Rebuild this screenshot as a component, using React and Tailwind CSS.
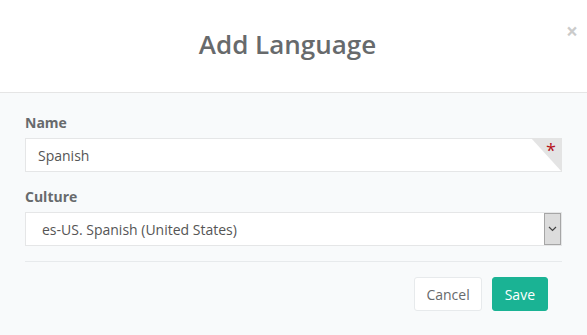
import React from "react";

export default function App() {
  return (
    <div
      className="w-[587px] h-[335px] overflow-hidden bg-[#f8fafb] text-[#676a6c]"
      style={{ fontFamily: '"Open Sans", "Liberation Sans", sans-serif' }}
    >
      <div className="relative h-[93px] bg-white border-b border-[#e5e5e5] flex items-center justify-center pr-[12px] pb-[3px]">
        <h4 className="text-[26px] leading-[29px] font-semibold text-[#676a6c] m-0">Add Language</h4>
        <button className="absolute right-[9px] top-[21px] text-[21px] font-bold leading-none text-black opacity-20">
          ×
        </button>
      </div>
      <div className="px-[25px] pt-[20px]">
        <div className="mb-[15px]">
          <label className="block text-[14px] leading-[20px] font-bold mb-[5px]">Name</label>
          <div className="relative h-[34px] bg-white border border-[#e5e6e7] flex items-center px-[12px] text-[14px] text-[#555]">
            Spanish
            <svg className="absolute right-[-1px] top-[-1px]" width="31" height="34" viewBox="0 0 31 34">
              <polygon points="0,0 31,0 31,34" fill="#e4e4e4" />
            </svg>
            <span className="absolute right-[5px] top-[1px] text-[18px] leading-[20px] text-[#b5121b]">*</span>
          </div>
        </div>
        <div>
          <label className="block text-[14px] leading-[20px] font-bold mb-[5px]">Culture</label>
          <div className="h-[34px] bg-white border border-[#e5e6e7] flex items-stretch text-[14px] text-[#555]">
            <div className="flex-1 flex items-center pl-[16px]">es-US. Spanish (United States)</div>
            <div className="w-[17px] bg-[#dcdcdc] border border-[#a6a6a6] flex items-center justify-center">
              <svg width="9" height="6" viewBox="0 0 9 6">
                <path d="M1 1 L4.5 4.5 L8 1" fill="none" stroke="#444" strokeWidth="1.2" />
              </svg>
            </div>
          </div>
        </div>
        <div className="mt-[15px] border-t border-[#e7eaec]" />
        <div className="flex justify-end gap-[10px] pt-[15px] pr-[14px]">
          <button className="h-[34px] px-[11px] bg-white border border-[#e7eaec] rounded-[3px] text-[14px] text-[#676a6c]">
            Cancel
          </button>
          <button className="h-[34px] px-[12px] bg-[#1ab394] border border-[#1ab394] rounded-[3px] text-[14px] text-white">
            Save
          </button>
        </div>
      </div>
    </div>
  );
}
